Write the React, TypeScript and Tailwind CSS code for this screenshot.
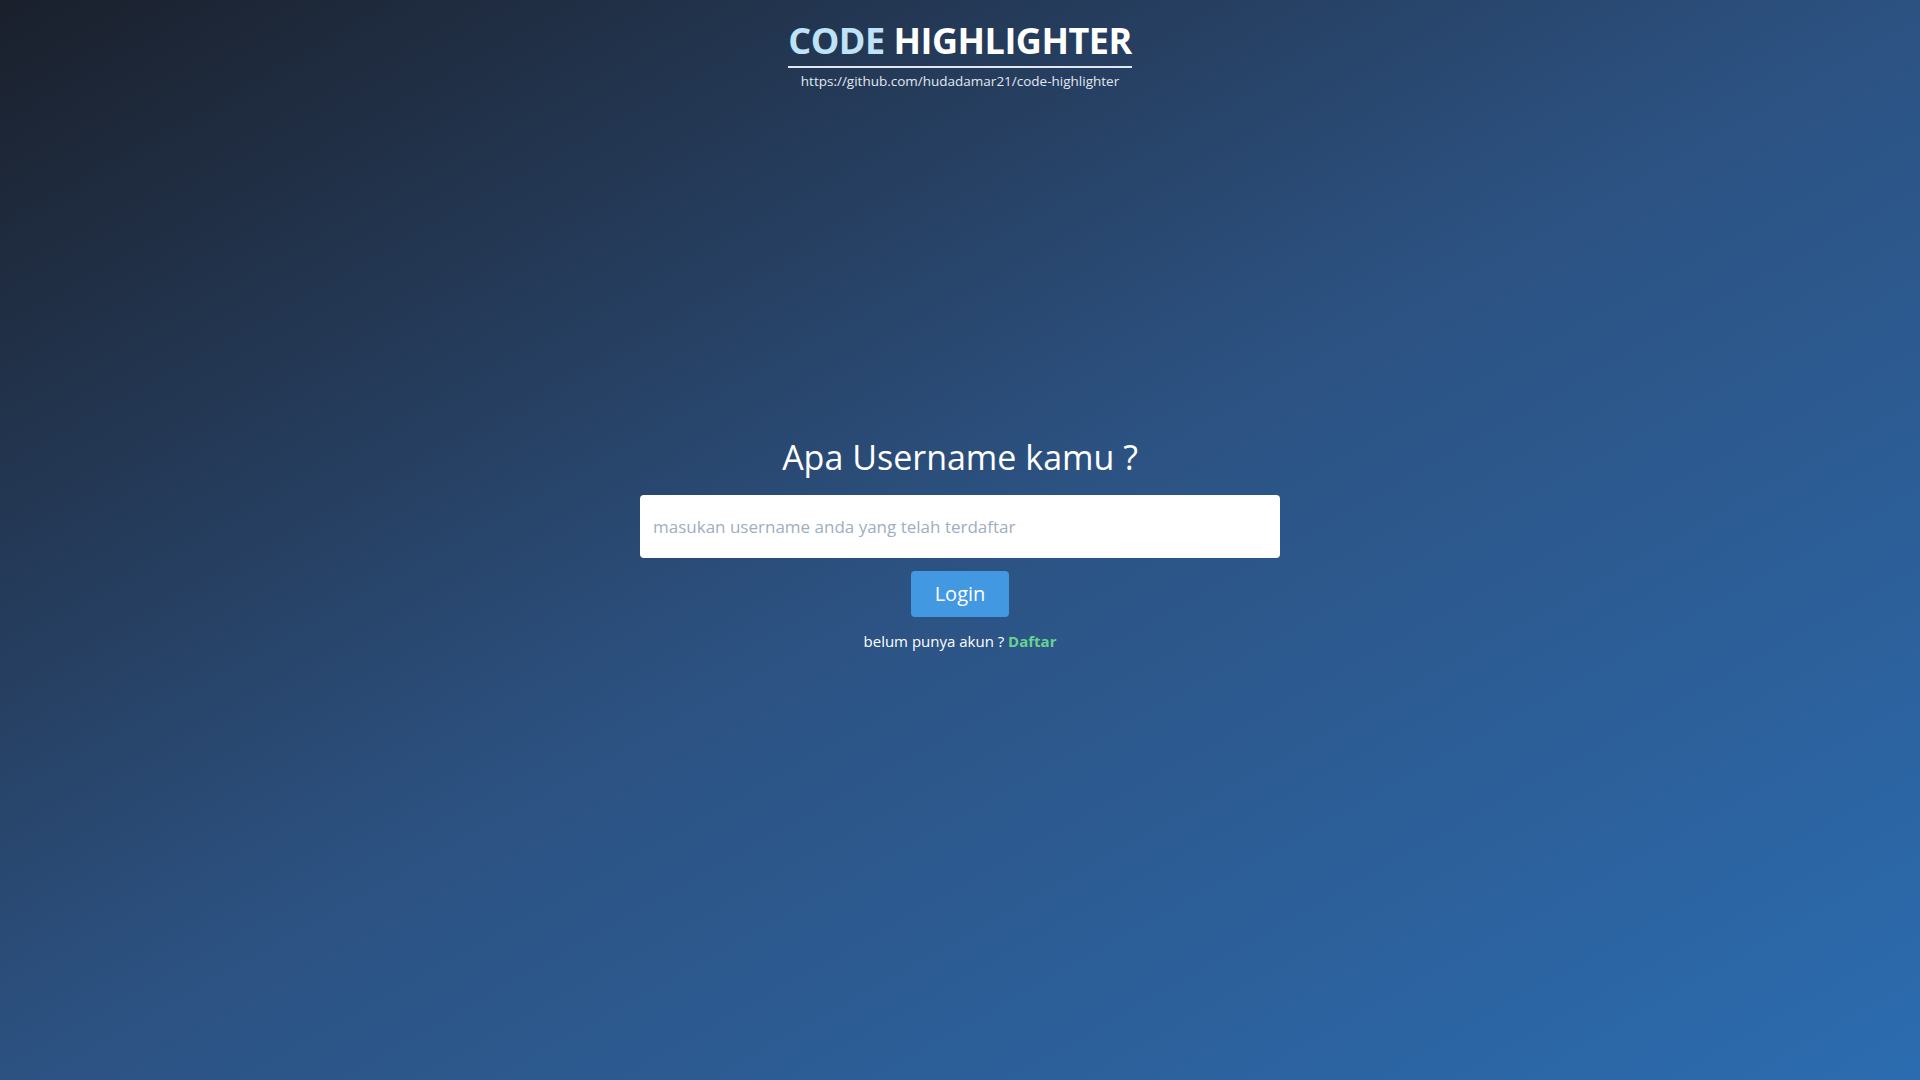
import React from "react";

export default function App() {
  return (
    <div
      className="w-full h-[1080px] overflow-hidden bg-gradient-to-br from-[#1a202c] via-[#2c5282] to-[#2b6cb0] text-white flex flex-col items-center"
      style={{ fontFamily: '"Open Sans", "Noto Sans", sans-serif' }}
    >
      <header className="pt-[16px] flex flex-col items-center">
        <h1 className="text-[36px] leading-[50px] font-bold border-b-2 border-[#e2e8f0] tracking-[-0.5px]">
          <span className="text-[#bee3f8]">CODE</span> HIGHLIGHTER
        </h1>
        <a className="text-[13.5px] leading-[20px] text-[#e2e8f0] mt-[3px]">
          https://github.com/hudadamar21/code-highlighter
        </a>
      </header>
      <main className="mt-[344px] flex flex-col items-center">
        <h2 className="text-[34px] leading-[44px] font-normal">Apa Username kamu ?</h2>
        <input
          className="mt-[16px] w-[640px] h-[63px] bg-white rounded px-[13px] text-[17px] text-[#2d3748] placeholder:text-[#a0aec0] outline-none"
          placeholder="masukan username anda yang telah terdaftar"
        />
        <button className="mt-[13px] w-[98px] h-[46px] rounded bg-[#4299e1] text-[20px] text-white">
          Login
        </button>
        <p className="mt-[12px] text-[15px] leading-[24px]">
          belum punya akun ? <a className="text-[#68d391] font-bold">Daftar</a>
        </p>
      </main>
    </div>
  );
}
